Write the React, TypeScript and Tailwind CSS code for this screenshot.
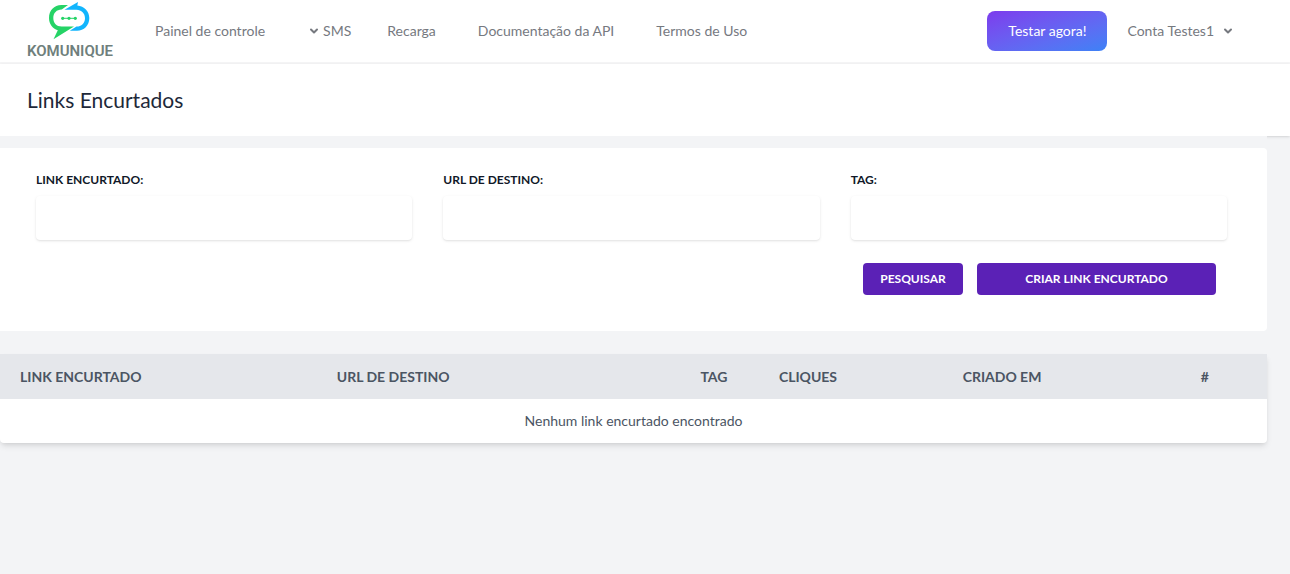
import { ChevronDown } from "lucide-react";
import { useState } from "react";

const columns = [
  { label: "Link Encurtado", width: "w-[25%]" },
  { label: "URL de destino", width: "w-[28.7%]" },
  { label: "Tag", width: "w-[6.2%]" },
  { label: "Cliques", width: "w-[14.5%]" },
  { label: "Criado em", width: "w-[18.8%]" },
  { label: "#", width: "" },
];

export default function App() {
  const [filters, setFilters] = useState({ link: "", url: "", tag: "" });

  return (
    <div className="min-h-screen bg-gray-100 font-['Lato','Open_Sans',sans-serif]">
      <Navbar />

      <header className="bg-white shadow px-[27px] py-[22px]">
        <h1 className="text-[21px] leading-7 text-gray-800">
          Links Encurtados
        </h1>
      </header>

      <main className="relative bg-gray-100 mr-[23px] pt-3">
        <form
          className="bg-white rounded-r pt-6 pb-9 pl-9 pr-10"
          onSubmit={(e) => e.preventDefault()}
        >
          <div className="grid grid-cols-3 gap-[31px]">
            <Field
              id="link"
              label="Link Encurtado:"
              value={filters.link}
              onChange={(link) => setFilters({ ...filters, link })}
            />
            <Field
              id="url"
              label="URL de destino:"
              value={filters.url}
              onChange={(url) => setFilters({ ...filters, url })}
            />
            <Field
              id="tag"
              label="Tag:"
              value={filters.tag}
              onChange={(tag) => setFilters({ ...filters, tag })}
            />
          </div>

          <div className="flex justify-end gap-[14px] mt-[23px] pr-[11px]">
            <button
              type="submit"
              className="w-[100px] h-8 rounded bg-[#5b21b6] text-white text-xs font-bold uppercase"
            >
              Pesquisar
            </button>
            <button
              type="button"
              className="w-[239px] h-8 rounded bg-[#5b21b6] text-white text-xs font-bold uppercase"
            >
              Criar link encurtado
            </button>
          </div>
        </form>

        <table className="w-full table-fixed mt-[23px] bg-white rounded-b shadow-md text-[#4b5563]">
          <thead className="bg-[#e5e7eb]">
            <tr className="h-[45px]">
              {columns.map((column) => (
                <th
                  key={column.label}
                  className={`${column.width} pl-5 text-left text-sm font-bold uppercase whitespace-nowrap`}
                >
                  {column.label}
                </th>
              ))}
            </tr>
          </thead>
          <tbody>
            <tr className="h-11">
              <td colSpan={6} className="text-center text-sm">
                Nenhum link encurtado encontrado
              </td>
            </tr>
          </tbody>
        </table>
      </main>
    </div>
  );
}

const Navbar = () => {
  return (
    <nav className="bg-white border-b-2 border-[#f5f5f6] h-16 flex items-center justify-between pl-[27px] pr-14 text-sm text-[#76797f]">
      <div className="flex items-center">
        <Logo />
        <a href="#painel" className="ml-[42px]">
          Painel de controle
        </a>
        <button type="button" className="ml-[43px] flex items-center gap-[3px]">
          <ChevronDown size={12} strokeWidth={4} />
          SMS
        </button>
        <a href="#recarga" className="ml-9">
          Recarga
        </a>
        <a href="#api" className="ml-[42px]">
          Documentação da API
        </a>
        <a href="#termos" className="ml-[42px]">
          Termos de Uso
        </a>
      </div>

      <div className="flex items-center gap-5">
        <button
          type="button"
          className="w-[120px] h-10 rounded-lg bg-linear-to-br from-[#7c3aed] to-[#3b82f6] text-white"
        >
          Testar agora!
        </button>
        <button type="button" className="flex items-center gap-2">
          Conta Testes1
          <ChevronDown size={12} strokeWidth={4} />
        </button>
      </div>
    </nav>
  );
};

const Logo = () => {
  return (
    <a href="#inicio" className="flex flex-col items-center w-[86px] pt-0.5">
      <svg viewBox="0 0 42 38" className="w-[42px] h-[38px]" fill="none">
        <path
          d="M19 3H12.500C5 3 0 8.500 0 16C0 22 3.500 26.500 8.800 28.300L4.500 37.200L25 24.500H12.500C7.700 24.500 4.300 21 4.300 16C4.300 11 7.700 7.500 12.500 7.500H12.800Z"
          fill="#25d366"
        />
        <path
          d="M15.500 7.800L29 0L28.300 3.400C35.200 4 40.300 9 40.300 16C40.300 23.500 35 28.700 28 28.700H20.800L27.500 24.500C32.500 24.500 36 21 36 16.200C36 11.500 32.500 7.800 27.500 7.800Z"
          fill="#12b5fd"
        />
        <path d="M13.700 16.300H26.300" stroke="#25d366" />
        <circle cx="13.700" cy="16.300" r="1.600" fill="#25d366" />
        <circle cx="20" cy="16.300" r="1.600" fill="#25d366" />
        <circle cx="26.300" cy="16.300" r="1.600" fill="#25d366" />
      </svg>
      <span className="font-['Roboto',sans-serif] text-[15px] leading-[22px] font-semibold text-[#6f7f7c]">
        KOMUNIQUE
      </span>
    </a>
  );
};

interface FieldProps {
  id: string;
  label: string;
  value: string;
  onChange: (value: string) => void;
}

const Field = ({ id, label, value, onChange }: FieldProps) => {
  return (
    <div>
      <label
        htmlFor={id}
        className="block mb-2 text-xs font-bold uppercase text-gray-900"
      >
        {label}
      </label>
      <input
        id={id}
        type="text"
        value={value}
        onChange={(e) => onChange(e.target.value)}
        className="block w-full h-11 px-3 rounded bg-white shadow text-sm"
      />
    </div>
  );
};
